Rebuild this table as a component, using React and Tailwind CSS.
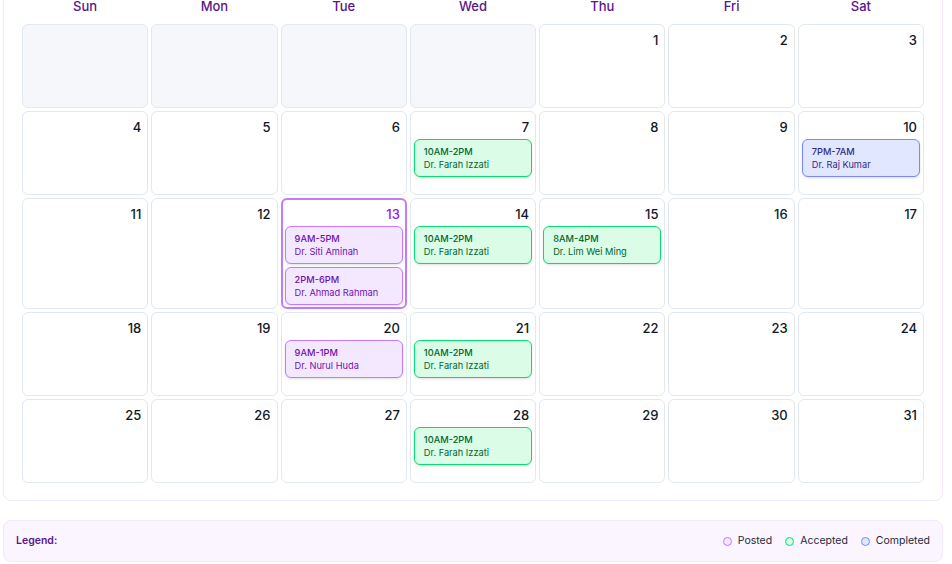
const days = ["Sun", "Mon", "Tue", "Wed", "Thu", "Fri", "Sat"];

const shifts = {
  7: [{ time: "10AM-2PM", doctor: "Dr. Farah Izzati", status: "accepted" }],
  10: [{ time: "7PM-7AM", doctor: "Dr. Raj Kumar", status: "completed" }],
  13: [
    { time: "9AM-5PM", doctor: "Dr. Siti Aminah", status: "posted" },
    { time: "2PM-6PM", doctor: "Dr. Ahmad Rahman", status: "posted" },
  ],
  14: [{ time: "10AM-2PM", doctor: "Dr. Farah Izzati", status: "accepted" }],
  15: [{ time: "8AM-4PM", doctor: "Dr. Lim Wei Ming", status: "accepted" }],
  20: [{ time: "9AM-1PM", doctor: "Dr. Nurul Huda", status: "posted" }],
  21: [{ time: "10AM-2PM", doctor: "Dr. Farah Izzati", status: "accepted" }],
  28: [{ time: "10AM-2PM", doctor: "Dr. Farah Izzati", status: "accepted" }],
};

const chipStyles = {
  posted: "bg-purple-100 border-purple-400 text-purple-800",
  accepted: "bg-green-100 border-green-400 text-green-800",
  completed: "bg-indigo-100 border-indigo-400 text-indigo-900",
};

const legend = [
  { label: "Posted", dot: "border-purple-400 bg-purple-100" },
  { label: "Accepted", dot: "border-green-400 bg-green-100" },
  { label: "Completed", dot: "border-indigo-400 bg-indigo-100" },
];

const TODAY = 13;
const LEADING_BLANKS = 4;

function ShiftChip({ shift }) {
  return (
    <div
      className={`rounded-md border px-[9px] py-[5px] text-[9.25px] leading-[13px] shadow-sm ${chipStyles[shift.status]}`}
    >
      <div className="font-medium">{shift.time}</div>
      <div>{shift.doctor}</div>
    </div>
  );
}

function DayCell({ day }) {
  if (!day) {
    return <div className="min-h-[84px] rounded-md border border-slate-200 bg-[#f6f7fa]" />;
  }
  const isToday = day === TODAY;
  const items = shifts[day] || [];
  return (
    <div
      className={
        isToday
          ? "min-h-[84px] rounded-md border-2 border-purple-400 bg-white px-[2px] pt-[6px] pb-[2px]"
          : "min-h-[84px] rounded-md border border-slate-200 bg-white px-[3px] pt-[7px] pb-1"
      }
    >
      <div
        className={`pr-[3px] text-right text-[13px] font-medium leading-4 ${
          isToday ? "text-purple-600" : "text-gray-900"
        }`}
      >
        {day}
      </div>
      {items.length > 0 && (
        <div className="mt-1 flex flex-col gap-[3px]">
          {items.map((s) => (
            <ShiftChip key={s.time + s.doctor} shift={s} />
          ))}
        </div>
      )}
    </div>
  );
}

export default function App() {
  const cells = [
    ...Array(LEADING_BLANKS).fill(null),
    ...Array.from({ length: 31 }, (_, i) => i + 1),
  ];

  return (
    <div
      className="h-[564px] overflow-hidden bg-white"
      style={{ fontFamily: "Inter, 'Noto Sans', sans-serif" }}
    >
      <div className="ml-[3px] w-[940px]">
        <div className="-mt-[19px] rounded-lg border border-purple-100 bg-white px-[18px] pt-[18px] pb-[17px]">
          <div className="mb-3 grid grid-cols-7 gap-[3px]">
            {days.map((d) => (
              <div key={d} className="text-center text-[13px] font-medium leading-[12px] text-purple-900">
                {d}
              </div>
            ))}
          </div>
          <div className="grid grid-cols-7 gap-[3px]">
            {cells.map((day, i) => (
              <DayCell key={i} day={day} />
            ))}
          </div>
        </div>

        <div className="mt-[19px] flex items-center justify-between rounded-lg border border-purple-100 bg-purple-50 px-3 py-3">
          <span className="text-[10.5px] font-semibold leading-4 text-purple-900">Legend:</span>
          <div className="flex items-center gap-[13px]">
            {legend.map((l) => (
              <div key={l.label} className="flex items-center gap-1.5">
                <span className={`h-[9px] w-[9px] rounded-full border ${l.dot}`} />
                <span className="text-[10.5px] leading-4 text-gray-800">{l.label}</span>
              </div>
            ))}
          </div>
        </div>
      </div>
    </div>
  );
}
